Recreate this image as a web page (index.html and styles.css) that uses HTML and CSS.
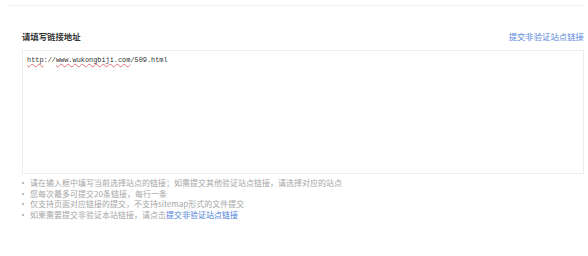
FILE: index.html
```html
<!DOCTYPE html>
<html lang="zh">
<head>
  <meta charset="UTF-8">
  <title>链接提交</title>
  <link rel="stylesheet" href="styles.css">
</head>
<body>
  <div class="top-line"></div>

  <div class="panel">
    <div class="panel-head">
      <span class="title">请填写链接地址</span>
      <a class="link" href="#">提交非验证站点链接</a>
    </div>

    <div class="url-box">
      <span class="typo">http</span>://<span class="typo">www.wukongbiji.com</span>/509.html
    </div>

    <ul class="tips">
      <li>请在输入框中填写当前选择站点的链接；如需提交其他验证站点链接，请选择对应的站点</li>
      <li>您每次最多可提交20条链接，每行一条</li>
      <li>仅支持页面对应链接的提交，不支持sitemap形式的文件提交</li>
      <li>如果需要提交非验证本站链接，请点击<a class="link" href="#">提交非验证站点链接</a></li>
    </ul>
  </div>
</body>
</html>
```

FILE: styles.css
```css
body {
  margin: 0;
  background: #fff;
  font-family: "Noto Sans CJK SC", "Liberation Sans", sans-serif;
  color: #333;
}

.top-line {
  margin: 5px 3px 0 8px;
  height: 1px;
  background: #f3f3f3;
}

.panel {
  padding: 0 4px 0 22px;
}

.panel-head {
  display: flex;
  justify-content: space-between;
  align-items: center;
  margin-top: 20px;
  height: 20px;
}

.title {
  font-size: 8.4px;
  font-weight: 600;
  color: #333;
}

.link {
  color: #5a88dc;
  text-decoration: none;
  font-size: 8.4px;
}

.url-box {
  margin-top: 4px;
  height: 112px;
  border: 1px solid #eee;
  padding: 5px 4px;
  font-family: "Liberation Mono", "DejaVu Sans Mono", monospace;
  font-size: 6.9px;
  color: #333;
}

.typo {
  text-decoration: underline wavy #e07070;
  text-decoration-thickness: 1px;
  text-underline-offset: 1px;
}

.tips {
  margin: 4px 0 0;
  padding: 0;
  list-style: none;
}

.tips li {
  position: relative;
  padding-left: 8px;
  font-size: 8px;
  line-height: 10.5px;
  color: #a6a6a6;
}

.tips li::before {
  content: "";
  position: absolute;
  left: 0;
  top: 4px;
  width: 2px;
  height: 2px;
  background: #bbb;
}

.tips .link {
  font-size: 8px;
  color: #4b7fd8;
}
```
